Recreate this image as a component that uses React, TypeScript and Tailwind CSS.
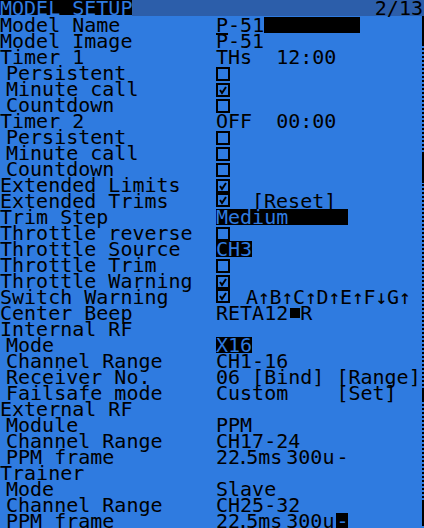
import type { ReactNode } from 'react'

// OpenTX style model setup page (212x64 LCD at 2x)

function Check({ on }: { on?: boolean }) {
  return (
    <svg width="14" height="14" viewBox="0 0 14 14" className="inline-block align-[-1px]">
      <rect x="1" y="1" width="12" height="12" fill="none" stroke="#000" strokeWidth="2" />
      {on && <path d="M4 7l2 3 4-6" fill="none" stroke="#000" strokeWidth="2" />}
    </svg>
  )
}

function Inv({ children, w }: { children: ReactNode; w: string }) {
  return <span className={`inline-block h-[16px] bg-black text-[#2f7be0] ${w}`}>{children}</span>
}

function Frame({ last }: { last?: boolean }) {
  return (
    <span className="flex">
      <span>22</span>
      <span className="-mx-[3px]">.</span>
      <span>5ms</span>
      <span className="ml-[4px]">300u</span>
      {last ? (
        <span className="ml-[2px] inline-block h-[16px] w-[12px] bg-black text-[#2f7be0]">-</span>
      ) : (
        <span className="ml-[2px]">-</span>
      )}
    </span>
  )
}

type Row = { label: string; sub?: boolean; value?: ReactNode }

const rows: Row[] = [
  {
    label: 'Model Name',
    value: (
      <span className="flex">
        <span className="underline decoration-2 underline-offset-[1px]">P</span>
        <span>-51</span>
        <span className="inline-block h-[16px] w-[96px] bg-black" />
      </span>
    ),
  },
  { label: 'Model Image', value: 'P-51' },
  { label: 'Timer 1', value: 'THs  12:00' },
  { label: 'Persistent', sub: true, value: <Check /> },
  { label: 'Minute call', sub: true, value: <Check on /> },
  { label: 'Countdown', sub: true, value: <Check /> },
  { label: 'Timer 2', value: 'OFF  00:00' },
  { label: 'Persistent', sub: true, value: <Check /> },
  { label: 'Minute call', sub: true, value: <Check /> },
  { label: 'Countdown', sub: true, value: <Check /> },
  { label: 'Extended Limits', value: <Check on /> },
  {
    label: 'Extended Trims',
    value: (
      <span className="flex items-start">
        <Check on />
        <span className="ml-[22px]">[Reset]</span>
      </span>
    ),
  },
  { label: 'Trim Step', value: <Inv w="w-[132px]">Medium</Inv> },
  { label: 'Throttle reverse', value: <Check /> },
  { label: 'Throttle Source', value: <Inv w="w-[36px]">CH3</Inv> },
  { label: 'Throttle Trim', value: <Check /> },
  { label: 'Throttle Warning', value: <Check on /> },
  {
    label: 'Switch Warning',
    value: (
      <span className="flex items-start">
        <Check on />
        <span className="ml-[16px] tracking-[-0.3px]">A↑B↑C↑D↑E↑F↓G↑</span>
      </span>
    ),
  },
  {
    label: 'Center Beep',
    value: (
      <span className="flex items-start">
        <span>RETA12</span>
        <span className="ml-[2px] mt-[3px] inline-block h-[10px] w-[10px] bg-black" />
        <span>R</span>
      </span>
    ),
  },
  { label: 'Internal RF' },
  { label: 'Mode', sub: true, value: <Inv w="w-[36px]">X16</Inv> },
  { label: 'Channel Range', sub: true, value: 'CH1-16' },
  { label: 'Receiver No.', sub: true, value: '06 [Bind] [Range]' },
  { label: 'Failsafe mode', sub: true, value: 'Custom    [Set]' },
  { label: 'External RF' },
  { label: 'Module', sub: true, value: 'PPM' },
  { label: 'Channel Range', sub: true, value: 'CH17-24' },
  { label: 'PPM frame', sub: true, value: <Frame /> },
  { label: 'Trainer' },
  { label: 'Mode', sub: true, value: 'Slave' },
  { label: 'Channel Range', sub: true, value: 'CH25-32' },
  { label: 'PPM frame', sub: true, value: <Frame last /> },
]

export default function App() {
  return (
    <div className="h-[528px] w-[424px] overflow-hidden bg-[#2f7be0] font-['DejaVu_Sans_Mono',monospace] text-[20px] text-black">
      <div className="flex h-[16px] whitespace-pre leading-[16px]">
        <div className="h-[15px] w-[132px] bg-black text-[#2f7be0]">MODEL SETUP</div>
        <div className="flex flex-1 justify-end bg-[#2c5eaa] pr-[1px]">2/13</div>
      </div>
      <div className="flex">
        <div className="grid flex-1 auto-rows-[16px] grid-cols-[216px_1fr] whitespace-pre leading-[16px]">
          {rows.map((r, i) => (
            <div key={i} className="contents">
              <div className={`pt-[1px] ${r.sub ? 'pl-[6px]' : ''}`}>{r.label}</div>
              <div className="pt-[1px]">{r.value}</div>
            </div>
          ))}
        </div>
        <div className="relative h-[512px] w-[2px] bg-[repeating-linear-gradient(to_bottom,#000_0_2px,transparent_2px_4px)]">
          <div className="absolute left-0 top-0 h-[28px] w-[2px] bg-black" />
          <div className="absolute left-0 top-[137px] h-[30px] w-[2px] bg-black" />
          <div className="absolute left-0 top-[374px] h-[10px] w-[2px] bg-black" />
          <div className="absolute left-0 top-[484px] h-[24px] w-[2px] bg-black" />
        </div>
      </div>
    </div>
  )
}
